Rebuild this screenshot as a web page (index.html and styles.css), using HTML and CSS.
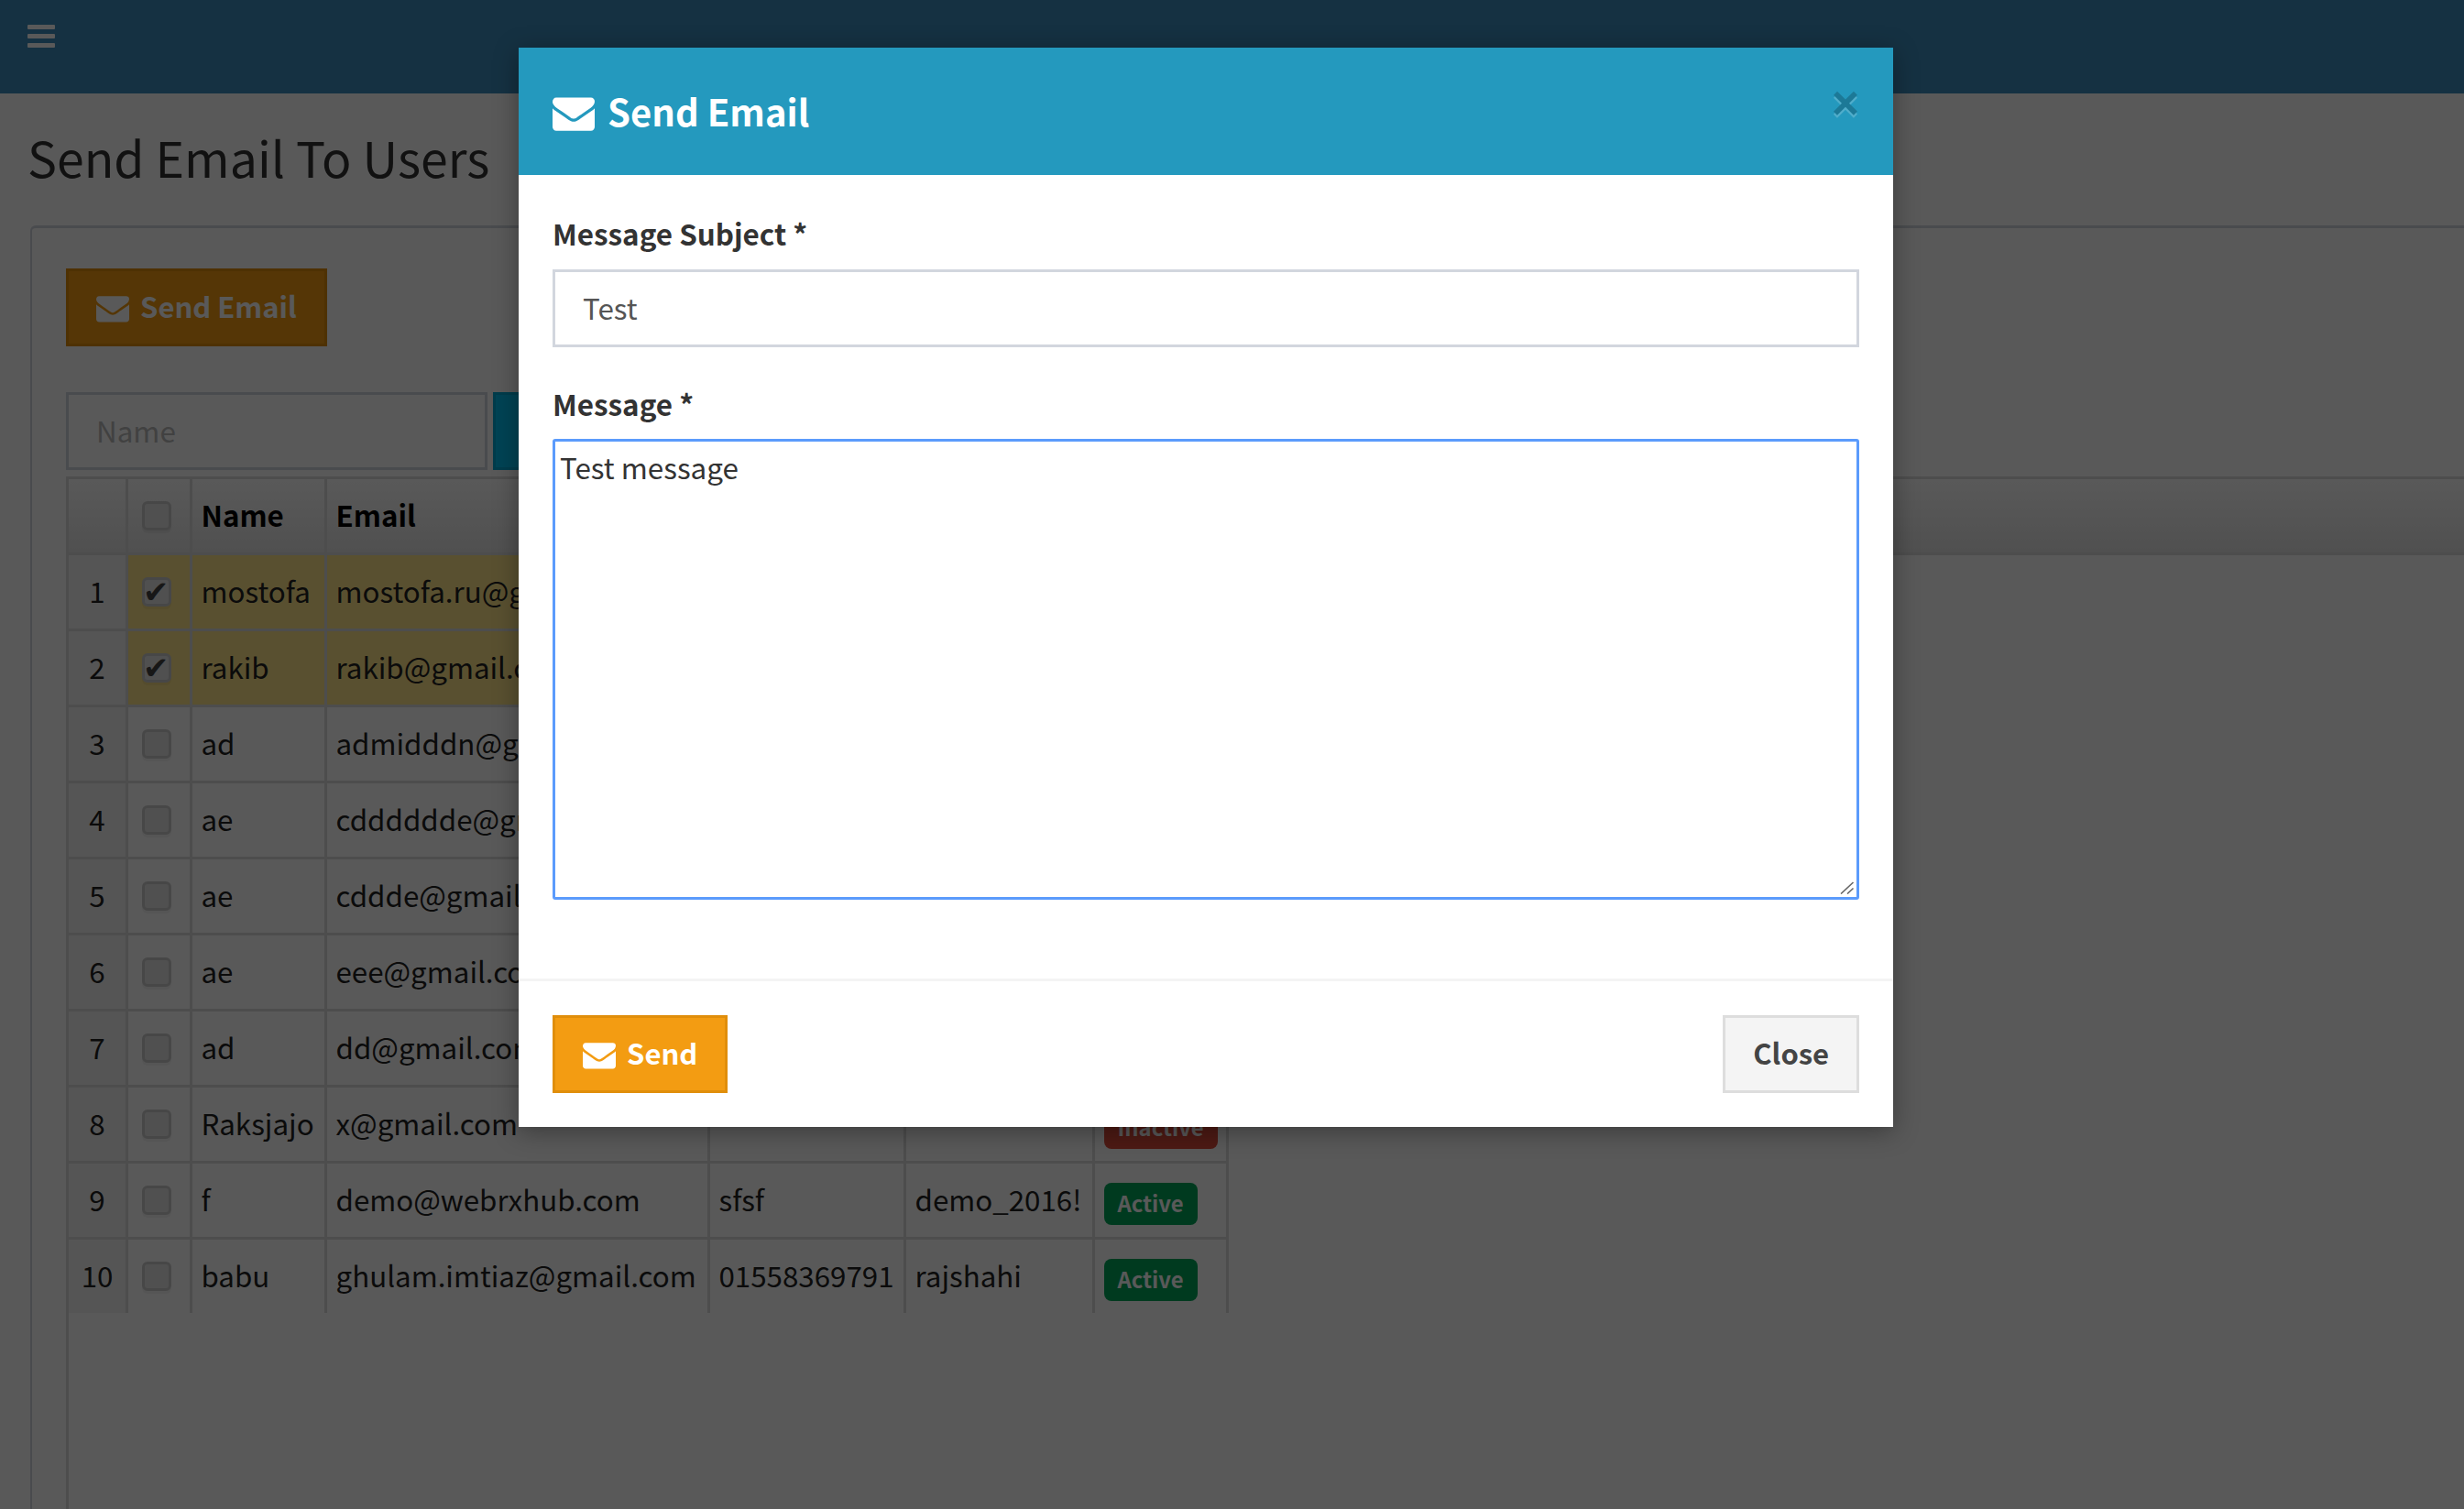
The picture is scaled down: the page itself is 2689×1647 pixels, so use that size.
FILE: index.html
```html
<!DOCTYPE html>
<html>

<head>
    <title>Send Email To Users</title>
    <link rel="stylesheet" href="styles.css">
</head>

<body>
    <svg class="icon-defs">
        <symbol id="icon-envelope" viewBox="0 0 1792 1792">
            <path d="M1792 710v794q0 66-47 113t-113 47h-1472q-66 0-113-47t-47-113v-794q44 49 101 87 362 246 497 345 57 42 92.5 65.5t94.5 48 110 24.5h2q51 0 110-24.5t94.5-48 92.5-65.5q170-123 498-345 57-39 100-87zm0-294q0 79-49 151t-122 123q-376 261-468 325-10 7-42.5 30.5t-54 38-52 32.5-57.5 27-50 9h-2q-23 0-50-9t-57.5-27-52-32.5-54-38-42.5-30.5q-91-64-262-182.5t-205-142.5q-62-42-117-115.5t-55-136.5q0-78 41.5-130t118.5-52h1472q65 0 112.5 47t47.5 113z" />
        </symbol>
    </svg>

    <div class="page">
        <header class="topbar">
            <div class="menu-toggle">
                <span></span>
                <span></span>
                <span></span>
            </div>
        </header>

        <h1 class="page-title">Send Email To Users</h1>

        <section class="box">
            <button class="btn btn-warning" type="button">
                <svg class="icon"><use href="#icon-envelope"></use></svg>
                Send Email
            </button>

            <form class="search-form">
                <input class="search-input" type="text" placeholder="Name">
                <button class="btn-search" type="button"></button>
            </form>

            <div class="table-wrap">
                <table class="users">
                    <colgroup>
                        <col class="col-no">
                        <col class="col-check">
                        <col class="col-name">
                        <col class="col-email">
                        <col class="col-phone">
                        <col class="col-address">
                        <col class="col-status">
                    </colgroup>
                    <thead>
                        <tr>
                            <th></th>
                            <th class="cell-check"><input type="checkbox"></th>
                            <th>Name</th>
                            <th>Email</th>
                            <th></th>
                            <th></th>
                            <th></th>
                        </tr>
                    </thead>
                    <tbody>
                        <tr class="selected">
                            <td class="num">1</td>
                            <td class="cell-check"><input type="checkbox" checked></td>
                            <td>mostofa</td>
                            <td>mostofa.ru@gmail.com</td>
                            <td></td>
                            <td></td>
                            <td></td>
                        </tr>
                        <tr class="selected">
                            <td class="num">2</td>
                            <td class="cell-check"><input type="checkbox" checked></td>
                            <td>rakib</td>
                            <td>rakib@gmail.com</td>
                            <td></td>
                            <td></td>
                            <td></td>
                        </tr>
                        <tr>
                            <td class="num">3</td>
                            <td class="cell-check"><input type="checkbox"></td>
                            <td>ad</td>
                            <td>admidddn@gmail.com</td>
                            <td></td>
                            <td></td>
                            <td></td>
                        </tr>
                        <tr>
                            <td class="num">4</td>
                            <td class="cell-check"><input type="checkbox"></td>
                            <td>ae</td>
                            <td>cdddddde@gmail.com</td>
                            <td></td>
                            <td></td>
                            <td></td>
                        </tr>
                        <tr>
                            <td class="num">5</td>
                            <td class="cell-check"><input type="checkbox"></td>
                            <td>ae</td>
                            <td>cddde@gmail.com</td>
                            <td></td>
                            <td></td>
                            <td></td>
                        </tr>
                        <tr>
                            <td class="num">6</td>
                            <td class="cell-check"><input type="checkbox"></td>
                            <td>ae</td>
                            <td>eee@gmail.com</td>
                            <td></td>
                            <td></td>
                            <td></td>
                        </tr>
                        <tr>
                            <td class="num">7</td>
                            <td class="cell-check"><input type="checkbox"></td>
                            <td>ad</td>
                            <td>dd@gmail.com</td>
                            <td></td>
                            <td></td>
                            <td></td>
                        </tr>
                        <tr>
                            <td class="num">8</td>
                            <td class="cell-check"><input type="checkbox"></td>
                            <td>Raksjajo</td>
                            <td>x@gmail.com</td>
                            <td></td>
                            <td></td>
                            <td><span class="label label-danger">Inactive</span></td>
                        </tr>
                        <tr>
                            <td class="num">9</td>
                            <td class="cell-check"><input type="checkbox"></td>
                            <td>f</td>
                            <td>demo@webrxhub.com</td>
                            <td>sfsf</td>
                            <td>demo_2016!</td>
                            <td><span class="label label-success">Active</span></td>
                        </tr>
                        <tr>
                            <td class="num">10</td>
                            <td class="cell-check"><input type="checkbox"></td>
                            <td>babu</td>
                            <td>ghulam.imtiaz@gmail.com</td>
                            <td>01558369791</td>
                            <td>rajshahi</td>
                            <td><span class="label label-success">Active</span></td>
                        </tr>
                    </tbody>
                </table>
            </div>
        </section>
    </div>

    <div class="backdrop"></div>

    <div class="modal">
        <div class="modal-header">
            <h4 class="modal-title">
                <svg class="icon icon-lg"><use href="#icon-envelope"></use></svg>
                Send Email
            </h4>
            <button class="close" type="button">&times;</button>
        </div>
        <form class="modal-body">
            <div class="form-group">
                <label for="subject">Message Subject *</label>
                <input class="form-control" type="text" id="subject" value="Test">
            </div>
            <div class="form-group message-group">
                <label for="message">Message *</label>
                <textarea class="message-box" id="message">Test message</textarea>
                <svg class="grip" width="16" height="14" viewBox="0 0 16 14">
                    <path d="M1 13.5 14.5 1M8 13.5 14.5 7.5" />
                </svg>
            </div>
        </form>
        <div class="modal-footer">
            <button class="btn btn-warning" type="button">
                <svg class="icon"><use href="#icon-envelope"></use></svg>
                Send
            </button>
            <button class="btn btn-default" type="button">Close</button>
        </div>
    </div>
</body>

</html>
```

FILE: styles.css
```css
html,
body {
    height: 100%;
}

body {
    margin: 0;
    overflow: hidden;
    background-color: #fff;
    font-family: "Noto Sans CJK SC", "Open Sans", sans-serif;
    font-size: 31.4px;
    line-height: 50px;
    color: #333;
}

.icon-defs {
    display: none;
}

.icon {
    width: 36px;
    height: 36px;
    fill: currentColor;
    vertical-align: -7px;
    margin-right: 5px;
}

.icon-lg {
    width: 46px;
    height: 46px;
    vertical-align: -8px;
    margin-right: 5px;
}

.page {
    height: 100%;
    overflow: hidden;
}

.topbar {
    height: 102px;
    background-color: #3c8dbc;
    padding: 27px 30px 0;
    box-sizing: border-box;
}

.menu-toggle {
    width: 30px;
    display: flex;
    flex-direction: column;
    gap: 5px;
}

.menu-toggle span {
    height: 5px;
    border-radius: 1px;
    background-color: #fff;
}

.page-title {
    margin: 0;
    padding: 36px 0 0 30px;
    height: 144px;
    box-sizing: border-box;
    font-size: 53.6px;
    line-height: 66px;
    font-weight: 400;
    color: #333;
}

.box {
    margin-left: 33px;
    width: 2700px;
    height: 1500px;
    box-sizing: border-box;
    padding: 44px 0 0 37px;
    border-top: 3px solid #d2d6de;
    border-left: 2px solid #d2d6de;
    border-top-left-radius: 6px;
}

.btn {
    height: 85px;
    padding: 0 30px 3px;
    box-sizing: border-box;
    border: 3px solid transparent;
    font-family: inherit;
    font-size: 31px;
    font-weight: 700;
    line-height: 50px;
}

.btn-warning {
    background-color: #f39c12;
    border-color: #e08e0b;
    color: #fff;
}

.btn-default {
    background-color: #f4f4f4;
    border-color: #ddd;
    color: #444;
}

.search-form {
    display: flex;
    gap: 6px;
    margin-top: 50px;
}

.search-input {
    width: 460px;
    height: 85px;
    box-sizing: border-box;
    padding: 0 30px 3px;
    border: 3px solid #d2d6de;
    font-family: inherit;
    font-size: 31.4px;
    color: #555;
}

.search-input::placeholder {
    color: #bbb;
}

.btn-search {
    width: 120px;
    height: 85px;
    border: 3px solid #00acd6;
    background-color: #00c0ef;
}

.table-wrap {
    margin-top: 7px;
    height: 1300px;
    box-sizing: border-box;
    border-left: 3px solid #ddd;
    border-top: 3px solid #ddd;
    background:
        linear-gradient(#ddd, #ddd) 0 80px / 100% 3px no-repeat,
        linear-gradient(#fff, #e5e5e5) 0 0 / 100% 80px no-repeat;
}

.users {
    table-layout: fixed;
    width: 1266px;
    border-collapse: separate;
    border-spacing: 0;
}

.col-no { width: 65px; }
.col-check { width: 70px; }
.col-name { width: 147px; }
.col-email { width: 418px; }
.col-phone { width: 214px; }
.col-address { width: 206px; }
.col-status { width: 146px; }

.users th,
.users td {
    height: 83px;
    box-sizing: border-box;
    padding: 0 0 2px 9.5px;
    border-right: 3px solid #ddd;
    border-bottom: 3px solid #ddd;
    text-align: left;
    white-space: nowrap;
    overflow: hidden;
    font-size: 31.3px;
}

.users th {
    font-weight: 700;
    color: #000;
}

.users tbody td {
    color: #222;
}

.users tbody tr:last-child td {
    height: 80px;
    border-bottom: none;
}

.users td.num {
    padding: 0 0 2px;
    text-align: center;
    background-color: #f4f4f4;
}

.users th.cell-check,
.users td.cell-check {
    padding: 0 5px 0 0;
    text-align: center;
}

.selected td {
    background-color: #ffe589;
}

input[type="checkbox"] {
    appearance: none;
    display: block;
    position: relative;
    width: 32px;
    height: 32px;
    margin: 0 auto;
    box-sizing: border-box;
    border: 3px solid #ccc;
    border-radius: 6px;
    background-color: #e6e6e6;
    box-shadow: 0 3px 0 rgba(0, 0, 0, 0.05);
}

input[type="checkbox"]:checked::after {
    content: "\2714";
    position: absolute;
    left: -2px;
    top: -9px;
    font-family: "DejaVu Sans", sans-serif;
    font-size: 34px;
    line-height: 44px;
    color: #444;
}

.label {
    display: inline-block;
    padding: 0 15px;
    height: 46px;
    line-height: 44px;
    border-radius: 8px;
    font-size: 23.8px;
    font-weight: 700;
    color: #fff;
    vertical-align: -4px;
}

.label-danger {
    background-color: #dd4b39;
}

.label-success {
    background-color: #00a65a;
}

.backdrop {
    position: absolute;
    top: 0;
    left: 0;
    right: 0;
    bottom: 0;
    background-color: rgba(0, 0, 0, 0.65);
}

.modal {
    position: absolute;
    top: 52px;
    left: 566px;
    width: 1500px;
    background-color: #fff;
    box-shadow: 0 5px 25px rgba(0, 0, 0, 0.35);
}

.modal-header {
    height: 139px;
    box-sizing: border-box;
    padding: 0 37px;
    display: flex;
    justify-content: space-between;
    align-items: center;
    background-color: #2499be;
    color: #fff;
}

.modal-title {
    margin: -2px 0 0;
    font-size: 40px;
    line-height: 50px;
    font-weight: 700;
}

.close {
    margin: -20px 0 0;
    padding: 0;
    border: none;
    background: none;
    font-family: "Liberation Sans", sans-serif;
    font-size: 52px;
    line-height: 52px;
    font-weight: 700;
    color: #000;
    opacity: 0.2;
    text-shadow: 0 3px 0 #fff;
}

.modal-body {
    display: block;
    height: 877px;
    box-sizing: border-box;
    padding: 39px 37px 0;
}

.form-group {
    margin-bottom: 37px;
}

.message-group {
    position: relative;
}

.form-group label {
    display: block;
    margin-bottom: 14px;
    font-weight: 700;
}

.message-group label {
    margin-bottom: 13px;
}

.form-control {
    display: block;
    width: 100%;
    height: 85px;
    box-sizing: border-box;
    padding: 0 30px 3px;
    border: 3px solid #d2d6de;
    font-family: inherit;
    font-size: 31.4px;
    color: #555;
}

.message-box {
    display: block;
    width: 100%;
    height: 503px;
    box-sizing: border-box;
    padding: 3px 5px;
    border: 3px solid #5b9bfc;
    border-radius: 3px;
    outline: none;
    resize: none;
    font-family: inherit;
    font-size: 31.4px;
    line-height: 50px;
    color: #333;
}

.grip {
    position: absolute;
    right: 5px;
    bottom: 6px;
    fill: none;
    stroke: #666;
    stroke-width: 1.6;
}

.modal-footer {
    height: 162px;
    box-sizing: border-box;
    padding: 37px 37px 0;
    border-top: 3px solid #f4f4f4;
    display: flex;
    justify-content: space-between;
}
```
